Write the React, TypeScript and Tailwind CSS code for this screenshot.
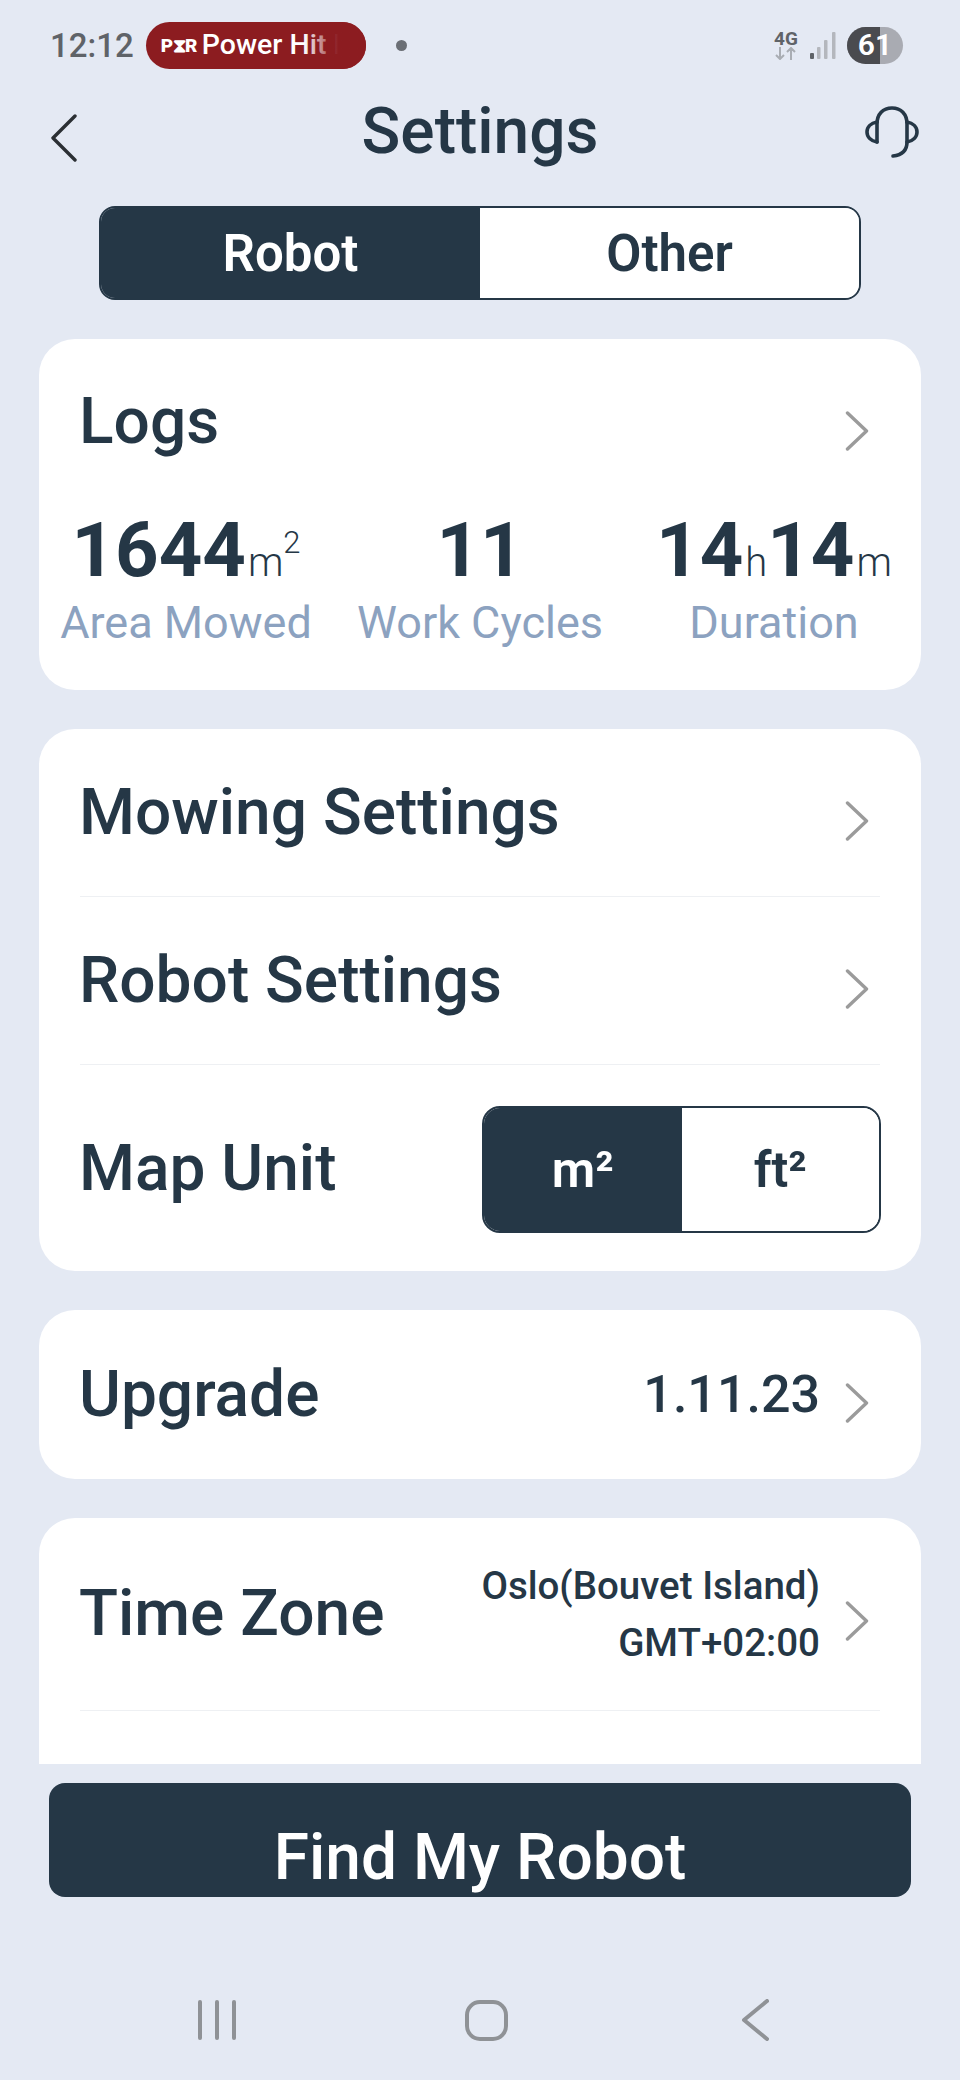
import React from 'react';

const Chevron = () => (
  <svg width="24" height="40" viewBox="0 0 24 40" fill="none" className="shrink-0">
    <path d="M2.5 2 L21.5 20 L2.5 38" stroke="#9b9b9b" strokeWidth="3.4" strokeLinecap="round" strokeLinejoin="round" />
  </svg>
);

const Divider = () => <div className="h-px bg-[#eef0f3]" />;

const Row = ({ label, right }: { label: string; right?: React.ReactNode }) => (
  <div className="flex items-center justify-between h-[167px] pl-[40px] pr-[52px]">
    <span className="text-[64px] font-medium leading-none">{label}</span>
    <div className="flex items-center gap-[25px]">
      {right}
      <div className="mt-[16px]">
        <Chevron />
      </div>
    </div>
  </div>
);

const Stat = ({ children, label }: { children: React.ReactNode; label: string }) => (
  <div className="flex flex-col items-center">
    <div className="flex items-baseline h-[70px] leading-none">{children}</div>
    <span className="mt-[12px] text-[45px] leading-[52px] text-[#8ca2c0]">{label}</span>
  </div>
);

const Num = ({ children }: { children: React.ReactNode }) => (
  <span className="text-[76px] font-bold leading-[70px]">{children}</span>
);

const Unit = ({ children }: { children: React.ReactNode }) => (
  <span className="text-[40px] font-light leading-none ml-[2px]">{children}</span>
);

export default function App() {
  return (
    <div
      className="w-[960px] h-[2080px] bg-[#e4e9f3] text-[#253746] overflow-hidden flex flex-col"
      style={{ fontFamily: 'Roboto, "Noto Sans", sans-serif' }}
    >
      {/* status bar */}
      <div className="h-[90px] shrink-0 flex items-center pl-[50px] pr-[57px]">
        <span className="text-[33px] font-medium text-[#5f6368] leading-none">12:12</span>
        <div className="relative ml-[12px] w-[220px] h-[47px] rounded-full bg-[#8c1c20] flex items-center pl-[15px] overflow-hidden">
          <span className="text-[19px] font-black text-white leading-none tracking-[-0.5px] w-[36px]">P⧗R</span>
          <span className="ml-[5px] text-[28.5px] font-medium text-white leading-none whitespace-nowrap">Power Hit R</span>
          <div className="absolute right-0 top-0 bottom-0 w-[62px] bg-gradient-to-l from-[#8c1c20] from-45% to-transparent" />
        </div>
        <div className="ml-[30px] w-[11px] h-[11px] rounded-full bg-[#6b6f75]" />
        <div className="flex-1" />
        <div className="flex flex-col items-center w-[24px] mr-[12px]">
          <span className="text-[19px] font-bold text-[#5f6368] leading-[17px]">4G</span>
          <svg width="22" height="13" viewBox="0 0 22 13" fill="none" stroke="#a9adb3" strokeWidth="2">
            <path d="M5 0v12M1 8l4 4 4-4M16 13V1M12 5l4-4 4 4" />
          </svg>
        </div>
        <svg width="26" height="27" viewBox="0 0 26 27" className="mr-[11px]" fill="#b4b7bd">
          <rect x="0" y="21" width="4" height="6" rx="1" fill="#5f6368" />
          <rect x="7" y="15" width="3.5" height="12" rx="1" />
          <rect x="14" y="8" width="3.5" height="19" rx="1" />
          <rect x="22" y="0" width="3.5" height="27" rx="1" />
        </svg>
        <div className="relative w-[56px] h-[37px] rounded-full overflow-hidden flex bg-[#a9abb2]">
          <div className="w-[33px] bg-[#4a4b4f]" />
          <span className="absolute inset-0 flex items-center justify-center text-[30px] font-semibold text-white leading-none">61</span>
        </div>
      </div>

      {/* header */}
      <div className="h-[96px] shrink-0 grid grid-cols-[1fr_auto_1fr] items-center px-[41px]">
        <svg width="27" height="48" viewBox="0 0 27 48" fill="none" className="ml-[9px]">
          <path d="M25 2 L3 24 L25 46" stroke="#2b2f33" strokeWidth="3.4" strokeLinecap="round" strokeLinejoin="round" />
        </svg>
        <span className="text-[64px] font-medium leading-none -mt-[12px]">Settings</span>
        <svg width="54" height="53" viewBox="0 0 54 53" fill="none" stroke="#253746" strokeWidth="3.6" strokeLinecap="round" className="justify-self-end -mt-[12px]">
          <path d="M12 36V18C12 8 18 2 27 2s15 6 15 16v18c0 8-5 13-14 14" />
          <path d="M12 16C6 17 2 21 2 26s4 9 10 10" />
          <path d="M42 16c6 1 10 5 10 10s-4 9-10 10" />
        </svg>
      </div>

      {/* tabs */}
      <div className="mt-[20px] mx-[99px] h-[94px] shrink-0 flex rounded-[16px] border-[2.5px] border-[#253746] overflow-hidden">
        <div className="flex-1 bg-[#253746] text-white flex items-center justify-center text-[51px] font-semibold leading-none">Robot</div>
        <div className="flex-1 bg-white flex items-center justify-center text-[51px] font-semibold leading-none">Other</div>
      </div>

      {/* scrolling cards */}
      <div className="mt-[39px] h-[1425px] shrink-0 overflow-hidden px-[39px] flex flex-col gap-[39px]">
        <div className="bg-white rounded-[36px] h-[351px] shrink-0 flex flex-col">
          <div className="flex items-center justify-between pl-[40px] pr-[52px] pt-[51px]">
            <span className="text-[64px] font-medium leading-none">Logs</span>
            <div className="mt-[18px]">
              <Chevron />
            </div>
          </div>
          <div className="mt-[61px] grid grid-cols-3">
            <Stat label="Area Mowed">
              <Num>1644</Num>
              <Unit>
                m<sup className="text-[31px] leading-none align-[8px]">2</sup>
              </Unit>
            </Stat>
            <Stat label="Work Cycles">
              <Num>11</Num>
            </Stat>
            <Stat label="Duration">
              <Num>14</Num>
              <Unit>h</Unit>
              <Num>14</Num>
              <Unit>m</Unit>
            </Stat>
          </div>
        </div>

        <div className="bg-white rounded-[36px] h-[542px] shrink-0 flex flex-col">
          <Row label="Mowing Settings" />
          <div className="mx-[41px]"><Divider /></div>
          <Row label="Robot Settings" />
          <div className="mx-[41px]"><Divider /></div>
          <div className="flex items-center justify-between pl-[40px] pr-[40px] pt-[41px]">
            <span className="text-[64px] font-medium leading-none -mt-[2px]">Map Unit</span>
            <div className="w-[399px] h-[127px] flex rounded-[18px] border-[2.5px] border-[#253746] overflow-hidden">
              <div className="flex-1 bg-[#253746] text-white flex items-center justify-center text-[50px] font-semibold leading-none">m²</div>
              <div className="flex-1 bg-white flex items-center justify-center text-[50px] font-semibold leading-none">ft²</div>
            </div>
          </div>
        </div>

        <div className="bg-white rounded-[36px] h-[169px] shrink-0 flex flex-col justify-center">
          <Row label="Upgrade" right={<span className="text-[52px] font-medium leading-none">1.11.23</span>} />
        </div>

        <div className="bg-white rounded-[36px] h-[290px] shrink-0 flex flex-col">
          <div className="h-[192px] shrink-0 flex items-center justify-between pl-[40px] pr-[52px]">
            <span className="text-[64px] font-medium leading-none">Time Zone</span>
            <div className="flex items-center gap-[25px]">
              <div className="text-right text-[38.5px] font-medium leading-[57px]">
                <div>Oslo(Bouvet Island)</div>
                <div>GMT+02:00</div>
              </div>
              <div className="mt-[14px]">
                <Chevron />
              </div>
            </div>
          </div>
          <div className="mx-[41px]"><Divider /></div>
        </div>
      </div>

      {/* find my robot */}
      <div className="mt-[19px] mx-[49px] h-[114px] shrink-0 rounded-[16px] bg-[#253746] text-white flex justify-center pt-[43px]">
        <span className="text-[64px] font-medium leading-none">Find My Robot</span>
      </div>

      {/* android nav */}
      <div className="mt-[103px] flex items-center h-[40px] shrink-0 pl-[198px]">
        <div className="flex gap-[13px] w-[267px]">
          <div className="w-[4px] h-[40px] rounded-full bg-[#8f9296]" />
          <div className="w-[4px] h-[40px] rounded-full bg-[#8f9296]" />
          <div className="w-[4px] h-[40px] rounded-full bg-[#8f9296]" />
        </div>
        <div className="w-[43px] h-[41px] rounded-[15px] border-[4px] border-[#8f9296]" />
        <svg width="28" height="42" viewBox="0 0 28 42" fill="none" className="ml-[233px]">
          <path d="M26 2 L3 21 L26 40" stroke="#8f9296" strokeWidth="4" strokeLinecap="round" strokeLinejoin="round" />
        </svg>
      </div>
    </div>
  );
}
